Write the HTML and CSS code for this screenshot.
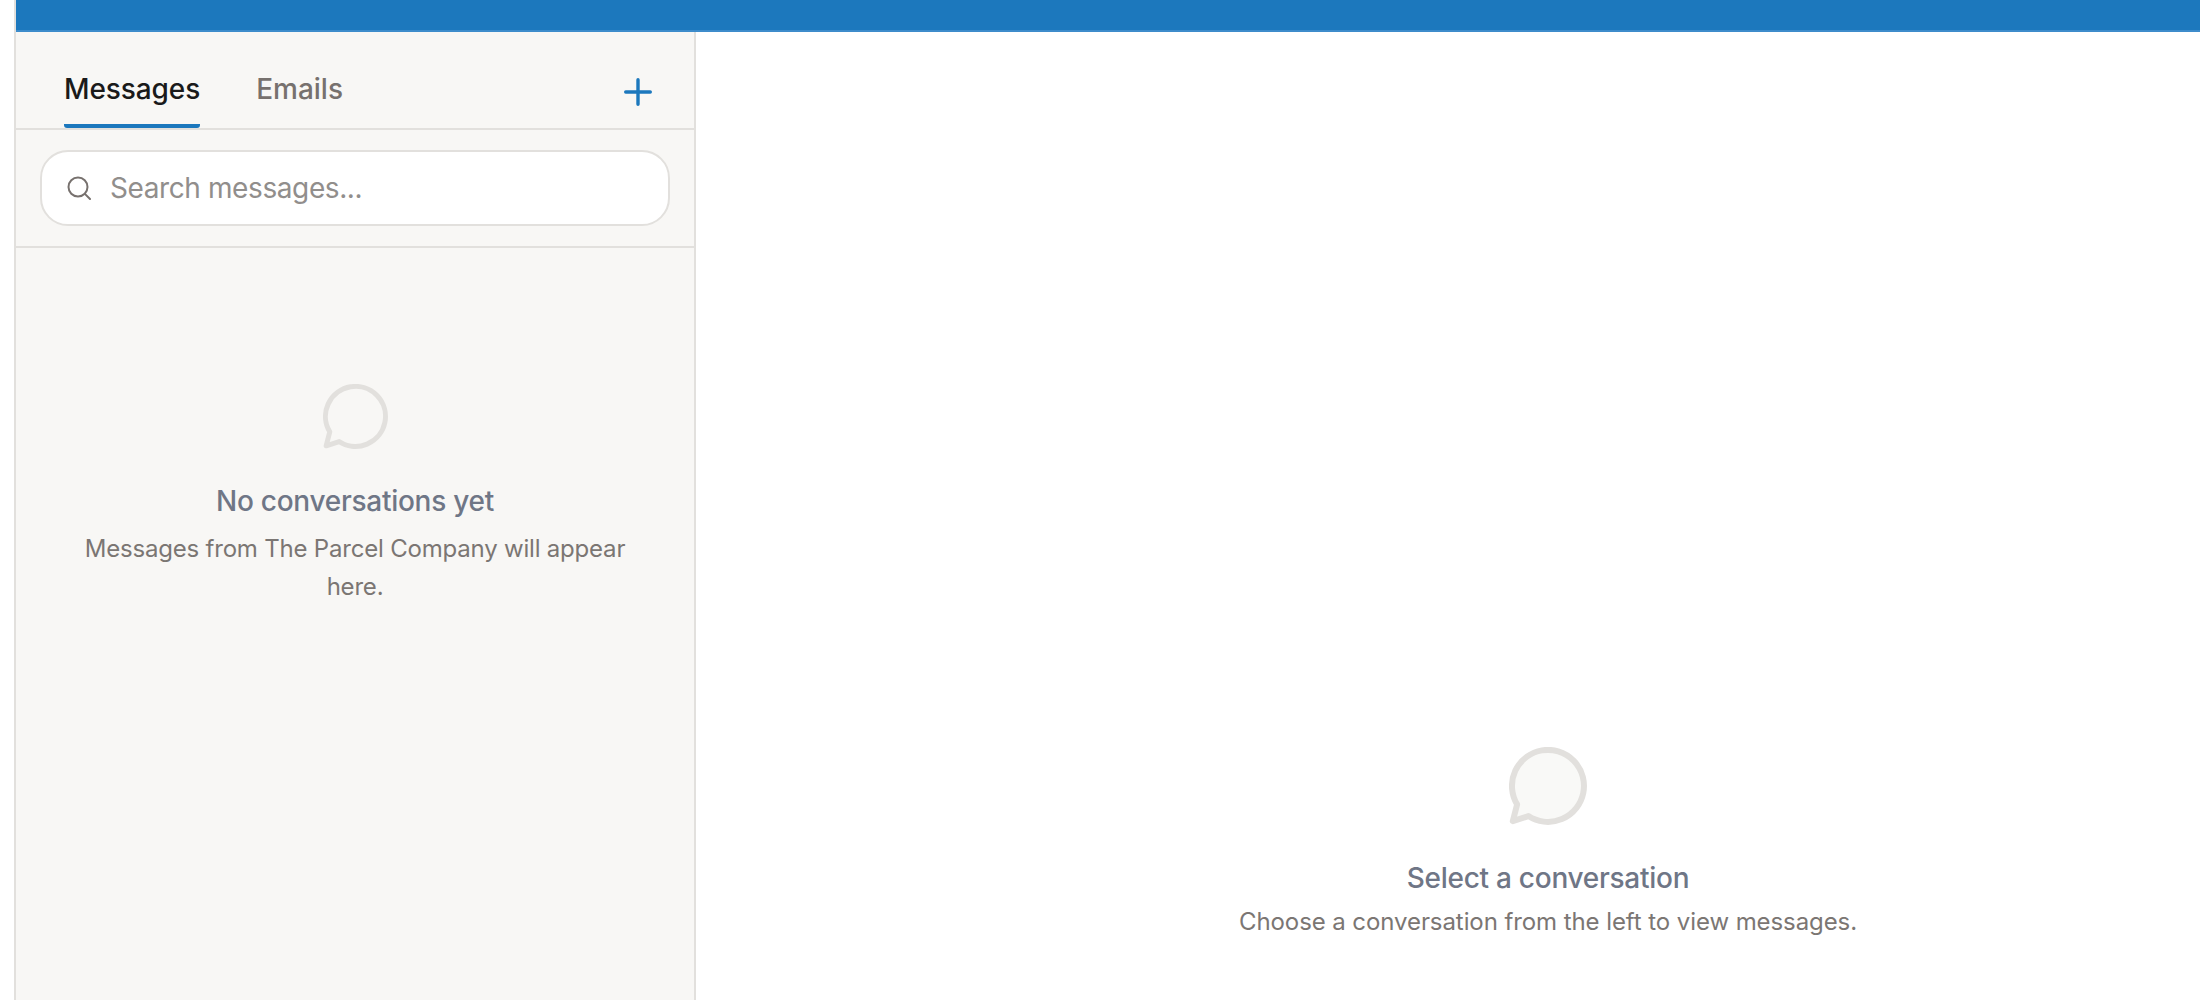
FILE: index.html
```html
<!DOCTYPE html>
<html lang="en">
<head>
<meta charset="utf-8">
<title>Messages</title>
<link rel="stylesheet" href="styles.css">
</head>
<body>
<div class="app">
  <div class="topbar"></div>
  <div class="workspace">
    <aside class="sidebar">
      <div class="tabs">
        <div class="tab tab-active">Messages</div>
        <div class="tab">Emails</div>
        <button class="add" aria-label="New message">
          <svg viewBox="0 0 28 28" width="28" height="28"><path d="M14 1.7v24.6M1.7 14h24.6"/></svg>
        </button>
      </div>
      <div class="search-wrap">
        <label class="search">
          <svg viewBox="0 0 24 24" width="24" height="24"><circle cx="11" cy="11" r="9.5"/><path d="M17.9 17.9 23 23"/></svg>
          <input type="text" placeholder="Search messages...">
        </label>
      </div>
      <div class="side-empty">
        <svg class="bubble bubble-small" viewBox="0 0 78 78"><path d="M19.4 69.1A36 36 0 1 0 8.1 57.4L3.8 74.2Z"/></svg>
        <h3 class="side-title">No conversations yet</h3>
        <p class="side-text">Messages from The Parcel Company will appear here.</p>
      </div>
    </aside>
    <main class="main">
      <div class="main-empty">
        <svg class="bubble bubble-large" viewBox="0 0 78 78"><path d="M19.4 69.1A36 36 0 1 0 8.1 57.4L3.8 74.2Z"/></svg>
        <h3 class="main-title">Select a conversation</h3>
        <p class="main-text">Choose a conversation from the left to view messages.</p>
      </div>
    </main>
  </div>
</div>
</body>
</html>
```
FILE: styles.css
```css
* { box-sizing: border-box; }
html, body { margin: 0; height: 100%; overflow: hidden; background: #fff; }
body { font-family: Inter, "Liberation Sans", sans-serif; }
.app { margin-left: 14px; height: 1000px; display: flex; flex-direction: column; border-left: 2px solid #e2e0dd; }
.topbar { height: 32px; flex: none; background: #1c78bd; border-bottom: 2px solid #3d8ccb; }
.workspace { flex: 1; display: flex; min-height: 0; }
.sidebar { width: 680px; flex: none; background: #f8f7f5; border-right: 2px solid #e2e0dd; display: flex; flex-direction: column; }
.tabs { height: 98px; flex: none; display: flex; align-items: flex-start; padding: 0 41px 0 48px; gap: 56px; border-bottom: 2px solid #e2e0dd; }
.tab { height: 96px; padding-top: 40px; font-size: 28px; line-height: 34px; font-weight: 500; color: #77716e; }
.tab-active { color: #1a1a1a; letter-spacing: -0.1px; border-bottom: 4px solid #1c78bd; border-radius: 0 0 3px 3px; }
.add { margin-left: auto; margin-top: 45px; padding: 0; width: 30px; height: 30px; border: 0; background: none; display: flex; align-items: center; justify-content: center; }
.add svg { fill: none; stroke: #1c78bd; stroke-width: 3.4; stroke-linecap: round; }
.search-wrap { height: 118px; flex: none; padding: 20px 24px 0 24px; border-bottom: 2px solid #e2e0dd; }
.search { height: 76px; display: flex; align-items: center; gap: 19px; padding: 0 25px; background: #fff; border: 2px solid #e2e0dd; border-radius: 28px; }
.search svg { flex: none; fill: none; stroke: #77716e; stroke-width: 2; stroke-linecap: round; }
.search input { flex: 1; min-width: 0; border: 0; outline: 0; padding: 0; background: none; font-family: inherit; font-size: 28px; letter-spacing: -0.4px; color: #141414; }
.search input::placeholder { color: #918e8c; opacity: 1; }
.side-empty { display: flex; flex-direction: column; align-items: center; text-align: center; padding: 136px 48px 0; }
.bubble { display: block; fill: #f8f7f5; stroke: #e2e0dd; stroke-width: 6; stroke-linejoin: round; stroke-linecap: round; }
.bubble-small { width: 65px; height: 65px; }
.bubble-large { width: 78px; height: 78px; fill: #f9f9f7; }
.side-title { margin: 34px 0 0; font-size: 28px; line-height: 36px; font-weight: 500; letter-spacing: -0.27px; color: #6f7686; }
.side-text { margin: 11px 0 0; font-size: 24px; line-height: 38px; font-weight: 400; letter-spacing: -0.2px; color: #7b7673; }
.main { flex: 1; min-width: 0; display: flex; justify-content: center; padding: 715px 0 0 200px; }
.main-empty { display: flex; flex-direction: column; align-items: center; text-align: center; }
.main-title { margin: 35px 0 0; font-size: 28px; line-height: 36px; font-weight: 500; letter-spacing: -0.27px; color: #6f7686; }
.main-text { margin: 9px 0 0; font-size: 24px; line-height: 34px; font-weight: 400; letter-spacing: -0.08px; color: #7b7673; }
```
